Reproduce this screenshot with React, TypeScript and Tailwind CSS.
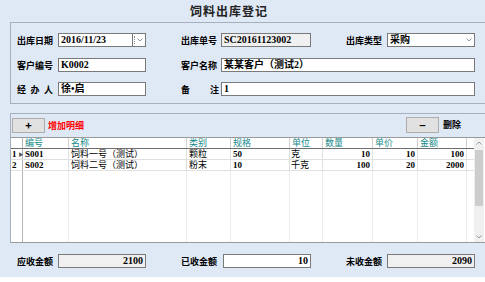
import type { ReactNode } from 'react';

const cols = 'grid grid-cols-[12px_46px_118px_44px_59px_33px_50px_45px_49px_7px]';

function Label({ children, className = '' }: { children: ReactNode; className?: string }) {
  return <div className={`text-[9px] font-bold leading-none whitespace-nowrap text-black ${className}`}>{children}</div>;
}

function Field({ children, className = '', gray = false, right = false }: { children?: ReactNode; className?: string; gray?: boolean; right?: boolean }) {
  return (
    <div
      className={`h-[14px] border border-[#7a7a7a] px-[2px] flex items-center text-[10px] leading-none font-semibold font-['Liberation_Serif','Noto_Sans_CJK_SC',serif] ${
        gray ? 'bg-[#f0f0f0]' : 'bg-white'
      } ${right ? 'justify-end' : ''} ${className}`}
    >
      {children}
    </div>
  );
}

function Chevron() {
  return (
    <svg width="6" height="4" viewBox="0 0 6 4" className="shrink-0">
      <path d="M0.5 0.5 L3 3 L5.5 0.5" fill="none" stroke="#808080" strokeWidth="0.8" />
    </svg>
  );
}

type Row = { no: string; name: string; kind: string; spec: string; unit: string; qty: string; price: string; amount: string };

const rows: Row[] = [
  { no: 'S001', name: '饲料一号（测试）', kind: '颗粒', spec: '50', unit: '克', qty: '10', price: '10', amount: '100' },
  { no: 'S002', name: '饲料二号（测试）', kind: '粉末', spec: '10', unit: '千克', qty: '100', price: '20', amount: '2000' },
];

const headers = ['编号', '名称', '类别', '规格', '单位', '数量', '单价', '金额'];

export default function App() {
  return (
    <div className="w-[485px] h-[282px] bg-white overflow-hidden font-['Noto_Sans_CJK_SC',sans-serif]">
      <div className="h-[277px] bg-[#dfe8f5] flex flex-col">
        {/* Title */}
        <div className="h-[22px] pl-[190px] flex items-center">
          <span className="text-[12px] font-bold tracking-[1px] text-[#222] leading-none">饲料出库登记</span>
        </div>

        {/* Header group */}
        <div className="ml-[10px] w-[475px] h-[82px] border-l border-t border-b border-[#a7b1bd] pt-[10px] pl-[6px] flex flex-col gap-[11px]">
          <div className="flex items-center h-[14px]">
            <Label className="w-[41px]">出库日期</Label>
            <div className="flex w-[88px]">
              <Field className="w-[75px]">2016/11/23</Field>
              <div className="w-[13px] h-[14px] bg-white border border-l-0 border-[#7a7a7a] flex items-center gap-[2px] pl-[1px]">
                <div className="w-px h-[8px] border-l border-dotted border-[#909090]" />
                <Chevron />
              </div>
            </div>
            <div className="w-[35px]" />
            <Label className="w-[40px]">出库单号</Label>
            <Field gray className="w-[90px]">SC20161123002</Field>
            <div className="w-[35px]" />
            <Label className="w-[41px]">出库类型</Label>
            <Field className="w-[88px] justify-between">
              <span>采购</span>
              <Chevron />
            </Field>
          </div>
          <div className="flex items-center h-[14px]">
            <Label className="w-[41px]">客户编号</Label>
            <Field className="w-[88px]">K0002</Field>
            <div className="w-[35px]" />
            <Label className="w-[40px]">客户名称</Label>
            <Field className="w-[254px]">某某客户（测试2）</Field>
          </div>
          <div className="flex items-center h-[14px] -mt-px">
            <Label className="w-[41px]">
              <div className="w-[36px] flex justify-between">
                <span>经</span>
                <span>办</span>
                <span>人</span>
              </div>
            </Label>
            <Field className="w-[88px]">徐•启</Field>
            <div className="w-[35px]" />
            <Label className="w-[40px]">
              <div className="w-[38px] flex justify-between">
                <span>备</span>
                <span>注</span>
              </div>
            </Label>
            <Field className="w-[254px]">1</Field>
          </div>
        </div>

        {/* Detail group */}
        <div className="mt-[9px] ml-[10px] w-[475px] border-l border-t border-[#a7b1bd] flex flex-col">
          <div className="h-[23px] flex items-start pt-[4px] pl-[1px]">
            <button className="w-[33px] h-[15px] bg-[#e1e1e1] border border-[#adadad] flex items-center justify-center text-[11px] font-bold leading-none text-black">
              +
            </button>
            <span className="ml-[3px] mt-[3px] text-[9px] font-bold leading-none text-[#ff0000]">增加明细</span>
            <div className="flex-1" />
            <button className="-mt-px w-[33px] h-[16px] bg-[#e1e1e1] border border-[#adadad] flex items-center justify-center text-[11px] font-bold leading-none text-black">
              −
            </button>
            <span className="ml-[4px] mt-[2px] mr-[24px] text-[9px] font-bold leading-none text-black">删除</span>
          </div>

          <div className="flex border-t border-b border-[#9a9a9a] bg-white">
            <div className="w-[463px] flex flex-col">
              {/* header */}
              <div className={`${cols} h-[11px] border-b border-[#6f6f6f] bg-white`}>
                <div className="border-r border-[#b5b5b5]" />
                {headers.map((h) => (
                  <div key={h} className="border-r border-[#d0d0d0] pl-[2px] text-[9px] leading-[10px] text-[#168a8a]">
                    {h}
                  </div>
                ))}
                <div />
              </div>
              {rows.map((r, i) => (
                <div
                  key={r.no}
                  className={`${cols} h-[11px] border-b border-[#e0e0e0] text-[9px] leading-[10px] text-black font-['Liberation_Serif','Noto_Sans_CJK_SC',serif]`}
                >
                  <div className="border-r border-[#b5b5b5] flex items-center pl-[1px] gap-[2px] font-bold">
                    <span>{i + 1}</span>
                    {i === 0 && <span className="text-[5px] leading-none text-[#555]">▶</span>}
                  </div>
                  <div className="border-r border-[#e0e0e0] pl-[2px] font-semibold">{r.no}</div>
                  <div className="border-r border-[#e0e0e0] pl-[2px]">{r.name}</div>
                  <div className="border-r border-[#e0e0e0] pl-[2px]">{r.kind}</div>
                  <div className="border-r border-[#e0e0e0] pl-[2px] font-semibold">{r.spec}</div>
                  <div className="border-r border-[#e0e0e0] pl-[1px]">{r.unit}</div>
                  <div className="border-r border-[#e0e0e0] pr-[2px] text-right font-semibold">{r.qty}</div>
                  <div className="border-r border-[#e0e0e0] pr-[2px] text-right font-semibold">{r.price}</div>
                  <div className="border-r border-[#e0e0e0] pr-[2px] text-right font-semibold">{r.amount}</div>
                  <div />
                </div>
              ))}
              <div className={`${cols} h-[71px]`}>
                <div className="border-r border-[#b5b5b5]" />
                <div className="border-r border-[#ececec]" />
                <div className="border-r border-[#ececec]" />
                <div className="border-r border-[#ececec]" />
                <div className="border-r border-[#ececec]" />
                <div className="border-r border-[#ececec]" />
                <div className="border-r border-[#ececec]" />
                <div className="border-r border-[#ececec]" />
                <div className="border-r border-[#ececec]" />
                <div />
              </div>
            </div>
            {/* scrollbar */}
            <div className="w-[10px] bg-[#f0f0f0] flex flex-col items-center py-[3px]">
              <svg width="6" height="4" viewBox="0 0 6 4">
                <path d="M0.5 3.5 L3 1 L5.5 3.5" fill="none" stroke="#808080" strokeWidth="0.8" />
              </svg>
              <div className="mt-[5px] w-[8px] h-[56px] bg-[#cdcdcd]" />
              <div className="flex-1" />
              <Chevron />
            </div>
            <div className="flex-1" />
          </div>
        </div>

        {/* Totals */}
        <div className="pt-[11px] pl-[17px] flex items-center">
          <Label className="w-[41px]">应收金额</Label>
          <Field gray right className="w-[88px]">2100</Field>
          <div className="w-[35px]" />
          <Label className="w-[42px]">已收金额</Label>
          <Field right className="w-[88px]">10</Field>
          <div className="w-[35px]" />
          <Label className="w-[41px]">未收金额</Label>
          <Field gray right className="w-[88px]">2090</Field>
        </div>
      </div>
    </div>
  );
}
